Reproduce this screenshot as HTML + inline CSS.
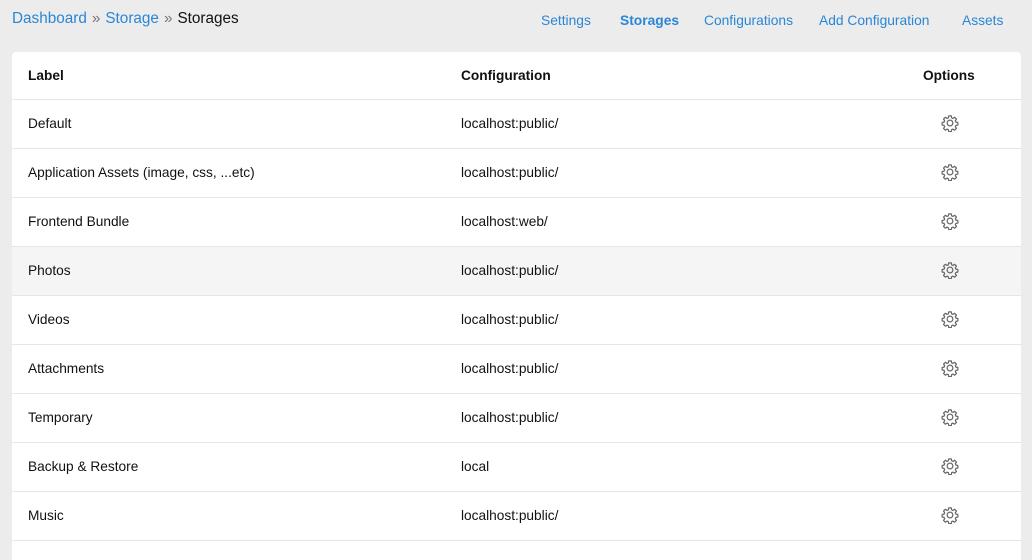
<!DOCTYPE html>
<html><head><meta charset="utf-8"><style>
*{margin:0;padding:0;box-sizing:border-box}
body{width:1032px;height:560px;overflow:hidden;background:#ececec;font-family:"Liberation Sans",sans-serif;color:#111;position:relative}
.bc{position:absolute;left:12px;top:10px;font-size:15.3px;}
.bc a{color:#2a86d6;text-decoration:none}
.bc .s{color:#777;margin:0 5px}
.nav{position:absolute;top:13px;font-size:13.8px;color:#2a86d6}
.card{position:absolute;left:12px;top:52px;width:1009px;height:508px;background:#fff;border-radius:4px 4px 0 0;overflow:hidden}
.row{position:absolute;left:0;width:1009px;height:49px;border-top:1px solid #e6e6e6;font-size:13.7px}
.row span{position:absolute;top:16px}
.c1{left:16px}.c2{left:449px}
.g{position:absolute;left:929px;top:14px}
.h span{font-weight:bold}
</style></head><body>
<div class="bc"><a>Dashboard</a><span class="s">»</span><a>Storage</a><span class="s">»</span>Storages</div>
<div class="nav" style="left:541px">Settings</div>
<div class="nav" style="left:620px;font-weight:bold">Storages</div>
<div class="nav" style="left:704px">Configurations</div>
<div class="nav" style="left:819px">Add Configuration</div>
<div class="nav" style="left:962px">Assets</div>
<div class="card">
<div class="row h" style="top:0;border-top:none;height:47px"><span class="c1" style="top:16px">Label</span><span class="c2" style="top:16px">Configuration</span><span style="left:911px;top:16px">Options</span></div>
</div>
<script>
const rows=[["Default","localhost:public/"],["Application Assets (image, css, ...etc)","localhost:public/"],["Frontend Bundle","localhost:web/"],["Photos","localhost:public/"],["Videos","localhost:public/"],["Attachments","localhost:public/"],["Temporary","localhost:public/"],["Backup &amp; Restore","local"],["Music","localhost:public/"],["",""]];
const gear='<svg class="g" width="18" height="18" viewBox="0 0 24 24" fill="none" stroke="#666" stroke-width="1.6" stroke-linejoin="round"><path d="M10.3 2.5h3.4l.5 2.6 1.8.8 2.2-1.5 2.4 2.4-1.5 2.2.8 1.8 2.6.5v3.4l-2.6.5-.8 1.8 1.5 2.2-2.4 2.4-2.2-1.5-1.8.8-.5 2.6h-3.4l-.5-2.6-1.8-.8-2.2 1.5-2.4-2.4 1.5-2.2-.8-1.8-2.6-.5v-3.4l2.6-.5.8-1.8-1.5-2.2 2.4-2.4 2.2 1.5 1.8-.8z"/><circle cx="12" cy="12" r="3.8"/></svg>';
let h='';rows.forEach((r,i)=>{h+=`<div class="row" style="top:${47+i*49}px;${i==9?'height:20px;':''}${i==3?'background:#f5f5f5':''}"><span class="c1">${r[0]}</span><span class="c2">${r[1]}</span>${r[0]?gear:''}</div>`});
document.querySelector('.card').insertAdjacentHTML('beforeend',h);
</script>
</body></html>
